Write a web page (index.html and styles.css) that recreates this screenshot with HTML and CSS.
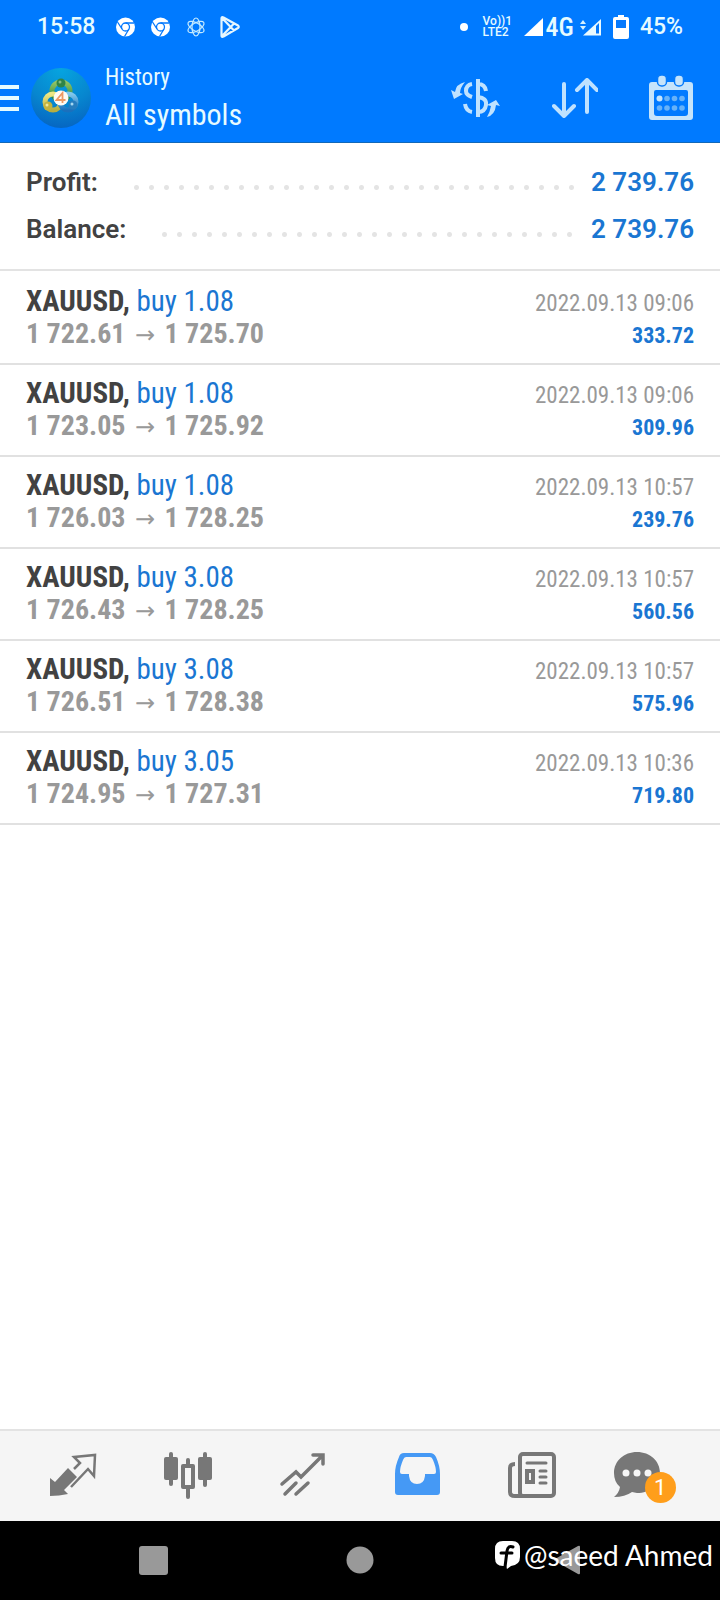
FILE: index.html
```html
<!DOCTYPE html>
<html lang="en">
<head>
<meta charset="utf-8">
<meta name="viewport" content="width=device-width, initial-scale=1">
<title>History</title>
<link rel="stylesheet" href="styles.css">
</head>
<body>
<header class="top">
  <div class="status">
    <span class="clock">15:58</span>
    <svg class="notices" width="126" height="24" viewBox="0 0 126 24" fill="none" aria-hidden="true">
      <g id="chrome">
        <circle cx="10.500" cy="12" r="9.500" fill="#fff"/>
        <circle cx="10.500" cy="12" r="4" stroke="#0579fd" stroke-width="1.300"/>
        <path d="M10.500 8H19M7 14L2.500 7M14 14l-4.500 7.500" stroke="#0579fd" stroke-width="1.300"/>
      </g>
      <use href="#chrome" x="35"/>
      <g stroke="#c5ebff" stroke-width="1.200">
        <ellipse cx="81" cy="12" rx="4" ry="9"/>
        <ellipse cx="81" cy="12" rx="4" ry="9" transform="rotate(60 81 12)"/>
        <ellipse cx="81" cy="12" rx="4" ry="9" transform="rotate(-60 81 12)"/>
      </g>
      <path d="M106.500 3.500Q106.500 1.500 108.500 2.500L123 10.500Q124.500 12 123 13L108.500 21.500Q106.500 22.500 106.500 20.500ZM107 3l12 12.500M107 21L119 8.500" stroke="#e6f7ff" stroke-width="2.200" stroke-linejoin="round"/>
    </svg>
    <span class="dot"></span>
    <span class="volte"><span>Vo))1</span><span>LTE2</span></span>
    <svg class="signal" width="19" height="18" viewBox="0 0 19 18" aria-hidden="true"><path d="M0 18L19 0v18z" fill="#fff"/></svg>
    <span class="net">4G</span>
    <svg class="signal-two" width="22" height="18" viewBox="0 0 22 18" aria-hidden="true"><path d="M0 6l3-4 3 4zM0 8h6l-3 4z" fill="#d5f1ff"/><path d="M3 17.500L21 1v16.500z" fill="#eafaff"/><path d="M16 8l3-3v10.500h-3z" fill="#0579fd"/></svg>
    <svg class="battery" width="16" height="24" viewBox="0 0 16 24" aria-hidden="true"><path d="M5 0h6v2h3q2 0 2 2v18q0 2-2 2H2q-2 0-2-2V4q0-2 2-2h3z" fill="#fff"/><path d="M3 5h10v8H3z" fill="#0579fd"/></svg>
    <span class="percent">45%</span>
  </div>
  <div class="bar">
    <button class="menu" aria-label="Menu"><span></span><span></span><span></span></button>
    <svg class="avatar" width="60" height="60" viewBox="0 0 60 60" role="img" aria-label="MetaTrader 4">
      <defs>
        <radialGradient id="sky" cx=".5" cy="0" r="1"><stop offset="0" stop-color="#06a5e0"/><stop offset=".6" stop-color="#0786cf"/><stop offset="1" stop-color="#0666c2"/></radialGradient>
        <linearGradient id="leaf" x2="0" y2="1"><stop stop-color="#94c465"/><stop offset="1" stop-color="#24853d"/></linearGradient>
        <linearGradient id="gold" x2="0" y2="1"><stop stop-color="#ede785"/><stop offset="1" stop-color="#b8ae40"/></linearGradient>
        <linearGradient id="aqua" x2="0" y2="1"><stop stop-color="#80c8ed"/><stop offset="1" stop-color="#1a70bd"/></linearGradient>
      </defs>
      <circle cx="30" cy="30" r="30" fill="url(#sky)"/>
      <g fill="none" stroke-width="1">
        <circle cx="30" cy="23" r="9" stroke="url(#leaf)" stroke-width="5"/>
        <circle cx="22" cy="34" r="8" stroke="url(#gold)" stroke-width="5"/>
        <circle cx="37" cy="34" r="8" stroke="url(#aqua)" stroke-width="5"/>
      </g>
      <circle cx="30" cy="15" r="4.500" fill="#2f8448"/><circle cx="17" cy="38" r="4.500" fill="#c3b33f"/><circle cx="42" cy="37" r="4.500" fill="#267dbe"/>
      <circle cx="29" cy="14" r="1.500" fill="#86bb83"/><circle cx="16" cy="37" r="1.500" fill="#eee69b"/><circle cx="41" cy="36" r="1.500" fill="#a5d8f1"/>
      <circle cx="30" cy="30" r="7.500" fill="#fffaf2"/>
      <path d="M31.500 35V25l-6 7h9" fill="none" stroke="#ed9964" stroke-width="1.800"/>
    </svg>
    <div class="titles"><span class="kicker">History</span><h1 class="title">All symbols</h1></div>
    <div class="actions">
      <button class="action" aria-label="Symbols">
        <svg width="50" height="40" viewBox="0 0 50 40" fill="none" stroke="#bfe2ff" stroke-width="4">
          <path d="M27 1v38M35 13q-1-7-8-7M27 19q9 1 8 8-1 7-8 7M21 6q-6 1-6 7 0 4 6 6M21 34q-6-1-7-8"/>
          <path d="M0 12l3 9 9-5-3-1q0-5 5-11Q5 6 4 14zM49 28l-4-6-9 5 4 1q-1 6-4 11 8-2 9-12z" fill="#bfe2ff" stroke="none"/>
        </svg>
      </button>
      <button class="action" aria-label="Sort">
        <svg width="46" height="40" viewBox="0 0 46 40" fill="none" stroke="#bfe2ff" stroke-width="4" stroke-linecap="round" stroke-linejoin="round"><path d="M12 6v31M2 28l10 10 10-10M35 34V3M25 12L35 2l10 10"/></svg>
      </button>
      <button class="action" aria-label="Calendar">
        <svg width="44" height="46" viewBox="0 0 44 46" fill="#c5e4fb">
          <path fill-rule="evenodd" d="M3 7h38q3 0 3 3v32q0 3-3 3H3q-3 0-3-3V10q0-3 3-3zM7 15q-2 0-2 2v21q0 3 3 3h28q3 0 3-3V17q0-2-2-2z"/>
          <rect x="8.500" y="0" width="9" height="11" rx="4" stroke="#077bfa" stroke-width="1.500"/><rect x="25.500" y="0" width="9" height="11" rx="4" stroke="#077bfa" stroke-width="1.500"/>
          <circle cx="10.500" cy="23.500" r="3"/>
          <g fill="#67b2f8"><circle cx="18" cy="23.500" r="2.800"/><circle cx="25.500" cy="23.500" r="2.800"/><circle cx="33" cy="23.500" r="2.800"/><circle cx="10.500" cy="33" r="2.800"/><circle cx="18" cy="33" r="2.800"/><circle cx="25.500" cy="33" r="2.800"/><circle cx="33" cy="33" r="2.800"/></g>
        </svg>
      </button>
    </div>
  </div>
</header>
<main class="main">
  <dl class="summary">
    <div class="sum"><dt>Profit:</dt><dd>2 739.76</dd></div>
    <div class="sum"><dt>Balance:</dt><dd>2 739.76</dd></div>
  </dl>
  <ul class="deals">
    <li class="deal"><div><p class="pair"><b>XAUUSD,</b> buy 1.08</p><p class="prices">1 722.61 <span class="to">→</span> 1 725.70</p></div><div class="result"><time>2022.09.13 09:06</time><p class="gain">333.72</p></div></li>
    <li class="deal"><div><p class="pair"><b>XAUUSD,</b> buy 1.08</p><p class="prices">1 723.05 <span class="to">→</span> 1 725.92</p></div><div class="result"><time>2022.09.13 09:06</time><p class="gain">309.96</p></div></li>
    <li class="deal"><div><p class="pair"><b>XAUUSD,</b> buy 1.08</p><p class="prices">1 726.03 <span class="to">→</span> 1 728.25</p></div><div class="result"><time>2022.09.13 10:57</time><p class="gain">239.76</p></div></li>
    <li class="deal"><div><p class="pair"><b>XAUUSD,</b> buy 3.08</p><p class="prices">1 726.43 <span class="to">→</span> 1 728.25</p></div><div class="result"><time>2022.09.13 10:57</time><p class="gain">560.56</p></div></li>
    <li class="deal"><div><p class="pair"><b>XAUUSD,</b> buy 3.08</p><p class="prices">1 726.51 <span class="to">→</span> 1 728.38</p></div><div class="result"><time>2022.09.13 10:57</time><p class="gain">575.96</p></div></li>
    <li class="deal"><div><p class="pair"><b>XAUUSD,</b> buy 3.05</p><p class="prices">1 724.95 <span class="to">→</span> 1 727.31</p></div><div class="result"><time>2022.09.13 10:36</time><p class="gain">719.80</p></div></li>
  </ul>
</main>
<nav class="tabs" aria-label="Sections">
  <button class="tab" aria-label="Quotes">
    <svg width="48" height="48" viewBox="0 0 48 48" fill="none"><path d="M1 26l5 4L19 16l9 9-13 13 4 4q-9 2-18 2z" fill="#777"/><path d="M25 17l6-6-6-6 21-2-1 21-6-7-17 18" stroke="#777" stroke-width="2.500"/></svg>
  </button>
  <button class="tab" aria-label="Charts">
    <svg width="48" height="48" viewBox="0 0 48 48" fill="#777"><rect y="5" width="14" height="23" rx="2"/><rect x="5" width="4" height="34" rx="2"/><rect x="34" y="5" width="14" height="23" rx="2"/><rect x="39" width="4" height="35" rx="2"/><rect x="22" y="6" width="4" height="8" rx="2"/><rect x="22" y="35" width="4" height="12" rx="2"/><path fill-rule="evenodd" d="M19 12h10q2 0 2 2v21q0 2-2 2H19q-2 0-2-2V14q0-2 2-2zm2 4v17h6V16z"/></svg>
  </button>
  <button class="tab" aria-label="Trade">
    <svg width="48" height="48" viewBox="0 0 48 48" fill="none" stroke="#777" stroke-width="3.500" stroke-linecap="round"><path d="M3 32l14-12 5 5L43 4M34 3h10v9M6 42l11-11M17 42l12-11"/></svg>
  </button>
  <button class="tab" aria-label="History" aria-current="page">
    <svg width="48" height="48" viewBox="0 0 48 48" fill="#4599f5"><path fill-rule="evenodd" d="M11 1h26q4 0 6 4 4 9 4 17v18q0 3-3 3H5q-3 0-3-3V22q0-8 4-17 1-4 5-4zm2 4q-2 0-3 3-3 7-3 12 0 2 2 2h7v2q1 8 8 8t8-8v-2h9q2 0 2-2 0-5-3-12-1-3-3-3z"/></svg>
  </button>
  <button class="tab" aria-label="News">
    <svg width="48" height="48" viewBox="0 0 48 48" fill="none" stroke="#777" stroke-width="4"><rect x="12" y="2" width="34" height="42" rx="3"/><path d="M7 12q-5 0-5 4v24q0 4 5 4h8"/><path d="M19 11h19M32 19h6M32 25h6M32 31h6" stroke-width="3" stroke-linecap="round"/><rect x="19" y="19" width="6" height="11" stroke-width="4"/></svg>
  </button>
  <button class="tab tab-chat" aria-label="Messages, 1 new">
    <svg width="48" height="48" viewBox="0 0 48 48"><path d="M24 0C37 0 47 9 47 21S37 41 24 41l-5-1q-7 5-18 5 5-4 6-10-6-5-6-14C1 9 11 0 24 0z" fill="#777"/><g fill="#f5f5f5"><circle cx="13" cy="21" r="3.500"/><circle cx="24" cy="21" r="3.500"/><circle cx="35" cy="21" r="3.500"/></g></svg>
    <span class="badge">1</span>
  </button>
</nav>
<footer class="system">
  <button class="key" aria-label="Recent apps"><svg width="30" height="30" viewBox="0 0 30 30"><rect x="1" y="1" width="29" height="29" rx="3" fill="#999"/></svg></button>
  <button class="key" aria-label="Home"><svg width="30" height="30" viewBox="0 0 30 30"><circle cx="15" cy="15" r="13.500" fill="#999"/></svg></button>
  <button class="key" aria-label="Back"><svg width="30" height="30" viewBox="0 0 30 30"><path d="M3 14L26 1q2-1 2 1v26q0 2-2 1L3 16q-2-1 0-2z" fill="#999"/></svg></button>
  <div class="credit">
    <svg width="25" height="28" viewBox="0 0 25 28" aria-hidden="true"><path d="M8 0h9q8 0 8 8v8q0 8-9 9l-4 3-1-3H8q-8 0-8-8V8q0-8 8-8z" fill="#fff"/><path d="M18 6q-5-2-6 4l-2 16M6 12h11" fill="none" stroke="#000" stroke-width="3" stroke-linecap="round"/></svg>
    <span>@saeed Ahmed</span>
  </div>
</footer>
</body>
</html>
```
FILE: styles.css
```css
* { box-sizing: border-box; }
body {
  margin: 0;
  min-height: 100vh;
  display: flex;
  flex-direction: column;
  background: #fff;
  color: #424242;
  font-family: "Roboto Condensed", Roboto, sans-serif;
}
button { padding: 0; border: 0; background: none; font: inherit; }
svg { display: block; flex: none; }
p, h1, dl, dd, ul { margin: 0; padding: 0; }

.top { background: #007aff; color: #e6fbff; border-bottom: 1px solid #1268b8; }
.status {
  display: flex;
  align-items: center;
  height: 54px;
  padding: 0 37px;
  font: 500 23px/24px Roboto, sans-serif;
}
.notices { margin-left: 20px; }
.dot { width: 8px; height: 8px; margin-left: auto; border-radius: 50%; background: #fff; }
.volte {
  display: flex;
  flex-direction: column;
  width: 28px;
  margin-left: 15px;
  font: 500 12px/11px Roboto, sans-serif;
  white-space: nowrap;
}
.signal { margin-left: 13px; }
.net { margin-left: 3px; font: 500 26px/26px "Roboto Condensed", Roboto, sans-serif; }
.signal-two { margin-left: 6px; }
.battery { margin: 0 11px; }

.bar { display: flex; align-items: center; height: 88px; padding: 0 27px 0 0; }
.menu { display: flex; flex-direction: column; gap: 7px; margin-right: 12px; }
.menu span { width: 19px; height: 4px; background: #e6fbff; }
.titles { margin-left: 14px; }
.kicker { display: block; font-size: 23px; line-height: 34px; }
.title { font-size: 30px; line-height: 40px; font-weight: 400; }
.actions { display: flex; align-items: center; gap: 51px; margin-left: auto; }

.main { flex: 1; }
.summary { padding: 16px 26px 16px; border-bottom: 2px solid #e3e3e3; font: 600 26px/47px Roboto, sans-serif; }
.sum { display: flex; align-items: center; }
.sum::after {
  content: "";
  order: 1;
  flex: 1;
  height: 5px;
  margin: 10px 10px 0 31px;
  background: radial-gradient(circle, #e4e4e4 2px, transparent 3px) 0 0 / 15px 5px;
}
.sum dd { order: 2; color: #1a76d2; }
.deals { padding-top: 2px; list-style: none; }
.deal {
  display: flex;
  justify-content: space-between;
  padding: 11px 26px;
  border-bottom: 2px solid #e1e1e1;
}
.pair { color: #1a76d2; font-size: 29px; line-height: 34px; }
.pair b { color: #424242; }
.prices { color: #999; font-size: 28px; line-height: 32px; font-weight: 700; }
.to { margin: 0 3px; font: 400 24px/24px "DejaVu Sans", sans-serif; }
.result { padding-top: 4px; text-align: right; }
.result time { display: block; color: #999; font-size: 23px; line-height: 32px; }
.gain { color: #1a76d2; font-size: 22px; line-height: 32px; font-weight: 700; }

.tabs {
  display: grid;
  grid-template-columns: repeat(6, 1fr);
  padding: 21px 16px;
  border-top: 2px solid #e3e3e3;
  background: #f5f5f5;
}
.tab { position: relative; display: flex; justify-content: center; }
.tab-chat { padding-right: 20px; }
.badge {
  position: absolute;
  left: 50%;
  top: 20px;
  width: 31px;
  margin-left: -2px;
  border-radius: 50%;
  background: #ff9e1b;
  color: #fff;
  font: 400 22px/31px Roboto, sans-serif;
}
.system {
  position: relative;
  display: flex;
  justify-content: space-between;
  align-items: center;
  height: 79px;
  padding: 0 138px 2px;
  background: #000;
}
.credit {
  position: absolute;
  right: 7px;
  top: 17px;
  display: flex;
  align-items: center;
  gap: 4px;
  color: #fff;
  font: 400 28px/34px Lato, sans-serif;
}
```
